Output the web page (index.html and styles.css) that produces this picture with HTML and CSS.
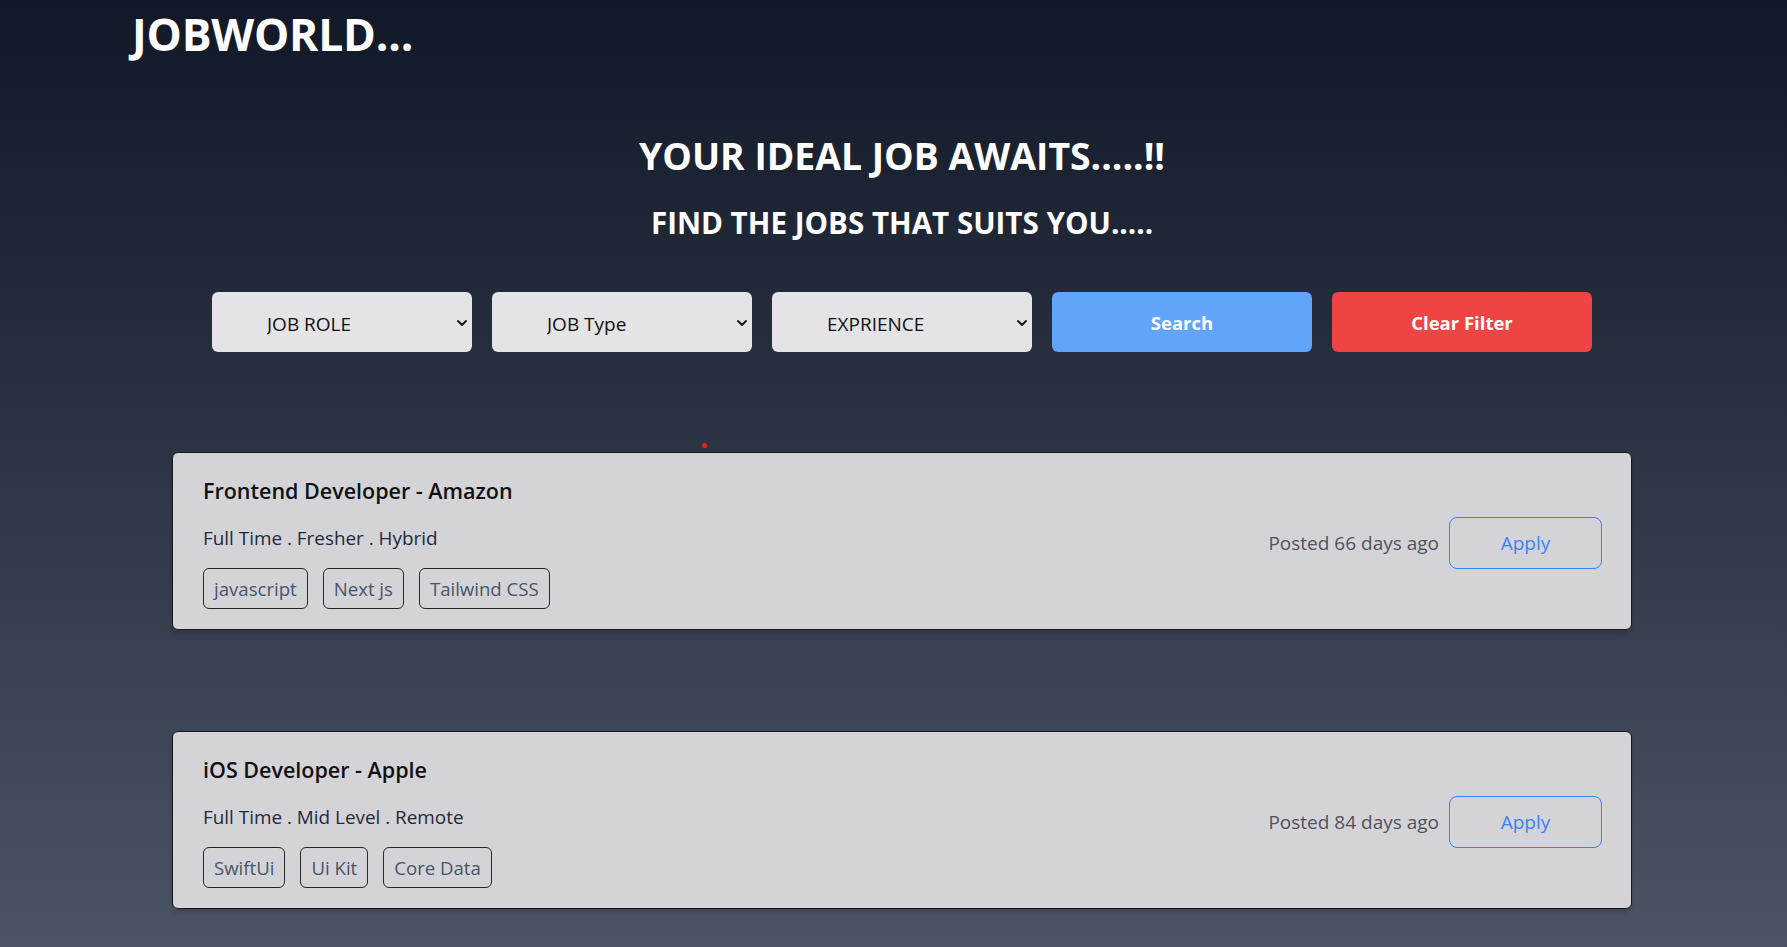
FILE: index.html
```html
<!DOCTYPE html>
<html lang="en">
<head>
<meta charset="utf-8">
<title>JOBWORLD</title>
<link rel="stylesheet" href="styles.css">
</head>
<body>
<div class="page">
  <header class="topbar">
    <h1 class="logo">JOBWORLD...</h1>
  </header>
  <main class="main">
    <section class="hero">
      <h2 class="hero-title">YOUR IDEAL JOB AWAITS.....!!</h2>
      <h3 class="hero-sub">FIND THE JOBS THAT SUITS YOU.....</h3>
    </section>
    <form class="filters">
      <div class="select-wrap">
        <select class="select"><option>JOB ROLE</option><option>Frontend Developer</option><option>iOS Developer</option></select>
        <svg class="chev" width="10" height="6" viewBox="0 0 10 6"><polyline points="1,1 5,5 9,1" fill="none" stroke="#111" stroke-width="1.8" stroke-linecap="round" stroke-linejoin="round"/></svg>
      </div>
      <div class="select-wrap">
        <select class="select"><option>JOB Type</option><option>Full Time</option><option>Part Time</option></select>
        <svg class="chev" width="10" height="6" viewBox="0 0 10 6"><polyline points="1,1 5,5 9,1" fill="none" stroke="#111" stroke-width="1.8" stroke-linecap="round" stroke-linejoin="round"/></svg>
      </div>
      <div class="select-wrap">
        <select class="select"><option>EXPRIENCE</option><option>Fresher</option><option>Mid Level</option></select>
        <svg class="chev" width="10" height="6" viewBox="0 0 10 6"><polyline points="1,1 5,5 9,1" fill="none" stroke="#111" stroke-width="1.8" stroke-linecap="round" stroke-linejoin="round"/></svg>
      </div>
      <button type="button" class="btn btn-search">Search</button>
      <button type="button" class="btn btn-clear">Clear Filter</button>
    </form>
    <section class="results">
      <span class="loader-dot"></span>
      <article class="card">
        <div class="card-info">
          <div class="card-title">Frontend Developer - Amazon</div>
          <div class="card-meta">Full Time . Fresher . Hybrid</div>
          <div class="tags">
            <span class="tag">javascript</span>
            <span class="tag">Next js</span>
            <span class="tag">Tailwind CSS</span>
          </div>
        </div>
        <div class="card-side">
          <span class="posted">Posted 66 days ago</span>
          <button type="button" class="apply">Apply</button>
        </div>
      </article>
      <article class="card card-next">
        <div class="card-info">
          <div class="card-title">iOS Developer - Apple</div>
          <div class="card-meta">Full Time . Mid Level . Remote</div>
          <div class="tags">
            <span class="tag">SwiftUi</span>
            <span class="tag">Ui Kit</span>
            <span class="tag">Core Data</span>
          </div>
        </div>
        <div class="card-side">
          <span class="posted">Posted 84 days ago</span>
          <button type="button" class="apply">Apply</button>
        </div>
      </article>
    </section>
  </main>
</div>
</body>
</html>
```
FILE: styles.css
```css
* { box-sizing: border-box; }
html, body { margin: 0; padding: 0; }
body {
  font-family: "Open Sans", "Noto Sans", sans-serif;
  background: linear-gradient(to bottom, #111827 0%, #4b5563 100%);
  min-height: 100vh;
  overflow: hidden;
}
.page { display: flow-root; min-height: 100vh; }

.topbar { padding: 12px 0 0 132px; height: 56px; }
.logo {
  margin: 0;
  font-size: 44.4px;
  line-height: 44px;
  font-weight: 700;
  color: #fff;
  letter-spacing: -0.2px;
}

.main { margin-left: 172px; width: 1460px; display: flow-root; }

.hero { text-align: center; color: #fff; padding-top: 80px; }
.hero-title {
  margin: 0;
  font-size: 37.3px;
  line-height: 40px;
  font-weight: 700;
}
.hero-sub {
  margin: 30px 0 0;
  font-size: 29.6px;
  line-height: 33px;
  font-weight: 700;
}

.filters {
  margin: 53px 0 0;
  display: flex;
  justify-content: center;
  gap: 20px;
}
.select-wrap { position: relative; width: 260px; height: 60px; }
.select {
  appearance: none;
  -webkit-appearance: none;
  width: 100%;
  height: 100%;
  border: none;
  border-radius: 6px;
  background: #e4e4e7;
  color: #111;
  font-family: inherit;
  font-size: 19px;
  padding: 3px 30px 0 55px;
  outline: none;
}
.chev { position: absolute; right: 5px; top: 28px; pointer-events: none; }

.btn {
  width: 260px;
  height: 60px;
  border: none;
  border-radius: 6px;
  color: #fff;
  font-family: inherit;
  font-size: 18.5px;
  font-weight: 700;
  cursor: pointer;
}
.btn-search { background: #60a5fa; }
.btn-clear { background: #ef4444; }

.results { padding-top: 91px; padding-bottom: 37px; }
.loader-dot {
  display: block;
  width: 5px;
  height: 5px;
  border-radius: 50%;
  background: #dc2626;
  margin: 0 0 4px 530px;
}

.card {
  height: 178px;
  background: #d4d4d8;
  border: 1px solid #18181b;
  border-radius: 6px;
  padding: 23px 29px 20px 30px;
  display: flex;
  justify-content: space-between;
  align-items: center;
  box-shadow: 0 4px 6px -1px rgba(0,0,0,0.15), 0 2px 4px -2px rgba(0,0,0,0.1);
}
.card-next { margin-top: 101px; }
.card-info { align-self: flex-start; }
.card-title {
  font-size: 21.5px;
  line-height: 29px;
  font-weight: 600;
  color: #111;
}
.card-meta {
  margin-top: 20px;
  font-size: 18.9px;
  line-height: 26px;
  color: #1e293b;
}
.tags { margin-top: 17px; display: flex; gap: 15px; }
.tag {
  height: 41px;
  line-height: 39px;
  padding: 0 10px;
  border: 1px solid #27272a;
  border-radius: 6px;
  font-size: 18.6px;
  color: #475569;
}

.card-side { display: flex; align-items: center; gap: 10px; }
.posted { font-size: 19px; color: #52525b; }
.apply {
  width: 153px;
  height: 52px;
  background: transparent;
  border: 1px solid #3b82f6;
  border-radius: 8px;
  color: #3b82f6;
  font-family: inherit;
  font-size: 19px;
  cursor: pointer;
}
```
